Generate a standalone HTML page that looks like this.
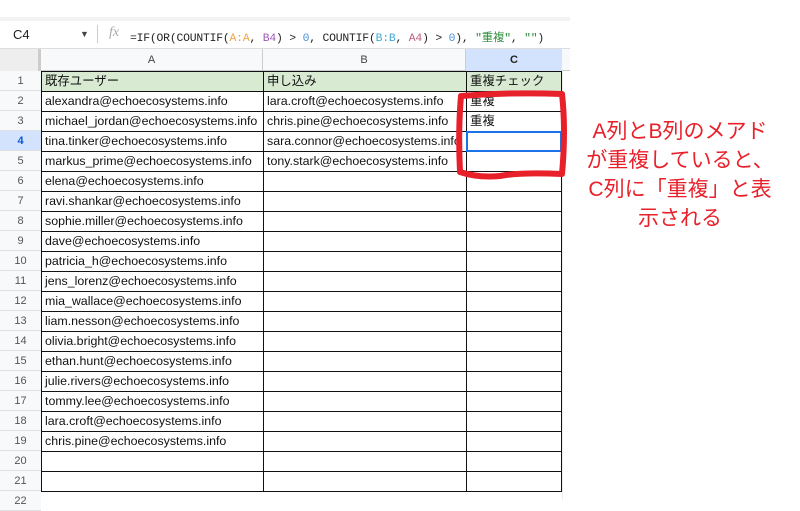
<!DOCTYPE html>
<html><head><meta charset="utf-8"><style>
body{margin:0;width:800px;height:500px;background:#fff;position:relative;overflow:hidden;font-family:"Liberation Sans","Noto Sans CJK JP",sans-serif}
.a{position:absolute}
.rh{position:absolute;left:0;width:41px;height:20px;background:#f8f9fa;border-bottom:1px solid #e0e0e0;color:#555;font-size:11px;text-align:center;line-height:20px;box-sizing:border-box}
.c{position:absolute;height:21px;border:1px solid #111;box-sizing:border-box;font-size:12.4px;line-height:19px;padding-left:3px;color:#111;white-space:nowrap;overflow:hidden}
</style></head><body>
<div class="a" style="left:0;top:17px;width:570px;height:4px;background:#f3f3f3"></div>
<div class="a" style="left:0;top:21px;width:570px;height:28px;background:#fff;border-bottom:1px solid #ddd;box-sizing:border-box"></div>
<div class="a" style="left:13px;top:27px;font-size:13px;color:#222">C4</div>
<div class="a" style="left:80px;top:29px;font-size:9px;color:#444">▼</div>
<div class="a" style="left:97px;top:25px;width:1px;height:18px;background:#ccc"></div>
<div class="a" style="left:109px;top:25px;font-size:14px;color:#aaa;font-style:italic;font-family:'Liberation Serif',serif">fx</div>
<div class="a" style="left:130px;top:29px;font-size:11.4px;font-family:'Liberation Mono','Noto Sans CJK JP',monospace;color:#222;white-space:nowrap;letter-spacing:-0.2px">=IF(OR(COUNTIF(<span style="color:#f4a340">A:A</span>, <span style="color:#9b59b6">B4</span>) &gt; <span style="color:#4a90d9">0</span>, COUNTIF(<span style="color:#3fa9d6">B:B</span>, <span style="color:#c0607a">A4</span>) &gt; <span style="color:#4a90d9">0</span>), <span style="color:#2e8b3c">"重複"</span>, <span style="color:#2e8b3c">""</span>)</div>
<div class="a" style="left:0;top:49px;width:570px;height:22px;background:#f8f9fa;border-bottom:1px solid #ccc;box-sizing:border-box"></div>
<div class="a" style="left:0;top:49px;width:41px;height:22px;background:#eee;border-right:3px solid #ccc;box-sizing:border-box"></div>
<div class="a" style="left:41px;top:49px;width:222px;height:22px;text-align:center;font-size:11px;line-height:22px;color:#444;border-right:1px solid #ccc;box-sizing:border-box">A</div>
<div class="a" style="left:263px;top:49px;width:203px;height:22px;text-align:center;font-size:11px;line-height:22px;color:#444;border-right:1px solid #ccc;box-sizing:border-box">B</div>
<div class="a" style="left:466px;top:49px;width:96px;height:22px;text-align:center;font-size:11px;line-height:22px;color:#222;font-weight:bold;background:#d3e3fd;box-sizing:border-box">C</div>
<div class="a" style="left:562px;top:71px;width:8px;height:429px;background:#fff;border-left:1px solid #eee"></div>
<div id="g"></div>
<script>
var A=["既存ユーザー","alexandra@echoecosystems.info","michael_jordan@echoecosystems.info","tina.tinker@echoecosystems.info","markus_prime@echoecosystems.info","elena@echoecosystems.info","ravi.shankar@echoecosystems.info","sophie.miller@echoecosystems.info","dave@echoecosystems.info","patricia_h@echoecosystems.info","jens_lorenz@echoecosystems.info","mia_wallace@echoecosystems.info","liam.nesson@echoecosystems.info","olivia.bright@echoecosystems.info","ethan.hunt@echoecosystems.info","julie.rivers@echoecosystems.info","tommy.lee@echoecosystems.info","lara.croft@echoecosystems.info","chris.pine@echoecosystems.info","",""];
var B=["申し込み","lara.croft@echoecosystems.info","chris.pine@echoecosystems.info","sara.connor@echoecosystems.info","tony.stark@echoecosystems.info"];
var C=["重複チェック","重複","重複"];
var h="";
for(var i=0;i<22;i++){var y=71+i*20;var sel=i==3;
h+='<div class="rh" style="top:'+y+'px;'+(sel?'background:#d3e3fd;color:#0b57d0;font-weight:bold;':'')+'">'+(i+1)+'</div>';
if(i<21){var bg=i==0?'background:#d9ead3;':'';
h+='<div class="c" style="left:41px;top:'+y+'px;width:223px;'+bg+'">'+A[i]+'</div>';
h+='<div class="c" style="left:263px;top:'+y+'px;width:204px;'+bg+'">'+(B[i]||'')+'</div>';
h+='<div class="c" style="left:466px;top:'+y+'px;width:96px;'+bg+'">'+(C[i]||'')+'</div>';}}
h+='<div class="a" style="left:466px;top:131px;width:96px;height:21px;border:2px solid #1a73e8;box-sizing:border-box"></div>';
document.getElementById('g').innerHTML=h;
</script>
<svg class="a" style="left:0;top:0" width="800" height="500"><path d="M461 96 Q510 92 562 94 Q566 130 562 174 Q520 172 500 176 Q478 178 460 172 Q458 130 461 96 Z" fill="none" stroke="#e8202a" stroke-width="6" stroke-linejoin="round"/></svg>
<div class="a" style="left:575px;top:117px;width:210px;text-align:center;font-size:21px;line-height:29px;color:#e8202a">A列とB列のメアド<br>が重複していると、<br>C列に「重複」と表<br>示される</div>
</body></html>
